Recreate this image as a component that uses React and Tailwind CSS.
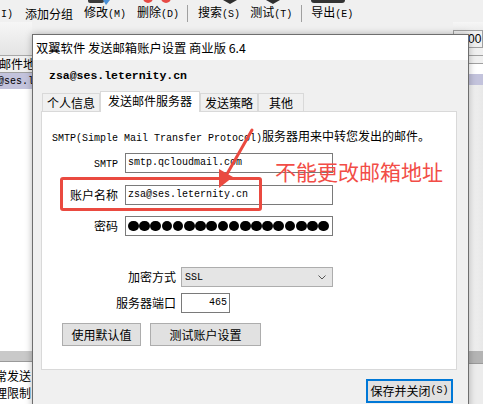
import React from "react";

const mono = "font-['Liberation_Mono',monospace] text-[10px]";

// SimSun style text: half width ascii, full width CJK
function Sim({ t }) {
  return t
    .split(/([\x20-\x7e]+)/)
    .filter(Boolean)
    .map((s, i) =>
      /^[\x20-\x7e]/.test(s) ? (
        <span key={i} className={mono}>
          {s}
        </span>
      ) : (
        <span key={i}>{s}</span>
      )
    );
}

function Field({ children, className = "" }) {
  return (
    <div
      className={
        "h-[20px] border border-[#7a7a7a] bg-white flex items-center leading-[14px] " +
        className
      }
    >
      {children}
    </div>
  );
}

function Toolbar() {
  return (
    <div className="h-[22px] bg-[#f0f0f0]">
      <svg width="483" height="5" className="block">
        <rect x="88" y="-4" width="16" height="7" rx="2" fill="#3a3a3a" />
        <path d="M103 0 L110 0 L106 5 Z" fill="#4a8fd6" />
        <circle cx="148" cy="-2" r="5" fill="#e64a45" />
        <circle cx="166" cy="-2" r="5" fill="#e64a45" />
        <path d="M223 0 L237 0 L230 4 Z" fill="#2e2e2e" />
        <path d="M266 0 L280 0 L273 4 Z" fill="#2e2e2e" />
        <rect x="311" y="-5" width="34" height="8" rx="3" fill="#333" />
      </svg>
      <div className="flex items-center h-[17px] leading-[14px] whitespace-nowrap">
        <span className="ml-[-5px]">
          <Sim t="(I)" />
        </span>
        <span className="ml-[12px]">添加分组</span>
        <span className="ml-[11px]">
          <Sim t="修改(M)" />
        </span>
        <span className="ml-[11px]">
          <Sim t="删除(D)" />
        </span>
        <span className="ml-[8px] w-px h-[17px] bg-[#a0a0a0]" />
        <span className="ml-[10px]">
          <Sim t="搜索(S)" />
        </span>
        <span className="ml-[10px]">
          <Sim t="测试(T)" />
        </span>
        <span className="ml-[9px] w-px h-[17px] bg-[#a0a0a0]" />
        <span className="ml-[9px]">
          <Sim t="导出(E)" />
        </span>
      </div>
    </div>
  );
}

function Tab({ label, active, w }) {
  return active ? (
    <div
      className={`${w} h-[21px] -mb-px relative z-10 bg-white border border-b-0 border-[#d9d9d9] flex items-center justify-center leading-[14px] pb-[2px]`}
    >
      {label}
    </div>
  ) : (
    <div
      className={`${w} h-[18px] bg-[#f0f0f0] border border-b-0 border-[#d9d9d9] flex items-center justify-center leading-[14px]`}
    >
      {label}
    </div>
  );
}

function Dialog() {
  return (
    <div className="absolute left-[32px] top-[34px] w-[437px] h-[390px] border border-[#6e6e6e] bg-[#f0f0f0] shadow-[0_0_7px_rgba(0,0,0,0.28)]">
      <div className="h-[25px] bg-white flex items-center pl-[3px] text-[12.3px] leading-[14px]">
        双翼软件 发送邮箱账户设置 商业版 6.4
      </div>
      <div className="pt-[9px] pl-[16px] h-[22px] font-['Liberation_Mono',monospace] font-bold text-[11.5px] leading-[13px]">
        zsa@ses.leternity.cn
      </div>
      <div className="mt-[9px] ml-[9px] flex items-end h-[20px]">
        <Tab label="个人信息" w="w-[58px]" />
        <Tab label="发送邮件服务器" w="w-[100px]" active />
        <Tab label="发送策略" w="w-[58px]" />
        <Tab label="其他" w="w-[46px]" />
      </div>
      <div className="ml-[8px] w-[416px] h-[259px] bg-white border border-[#d9d9d9]">
        <div className="mt-[17px] ml-[10px] h-[14px] leading-[14px] whitespace-nowrap">
          <Sim t="SMTP(Simple Mail Transfer Protocol)服务器用来中转您发出的邮件。" />
        </div>
        <div className="mt-[10px] flex items-center">
          <div className="w-[76px] text-right leading-[14px]">
            <Sim t="SMTP" />
          </div>
          <Field className="ml-[7px] w-[208px] pl-[2px]">
            <span className={mono}>smtp.qcloudmail.com</span>
          </Field>
        </div>
        <div className="mt-[12px] flex items-center">
          <div className="w-[76px] text-right leading-[14px]">账户名称</div>
          <Field className="ml-[7px] w-[208px] pl-[2px]">
            <span className={mono}>zsa@ses.leternity.cn</span>
          </Field>
        </div>
        <div className="mt-[11px] flex items-center">
          <div className="w-[76px] text-right leading-[14px]">密码</div>
          <Field className="ml-[7px] w-[208px] pl-[2px] gap-[0.5px]">
            {Array.from({ length: 18 }).map((_, i) => (
              <span key={i} className="w-[10.7px] h-[10.7px] rounded-full bg-black" />
            ))}
          </Field>
        </div>
        <div className="mt-[31px] flex items-center">
          <div className="w-[134px] text-right leading-[14px]">加密方式</div>
          <div className="ml-[5px] w-[152px] h-[20px] bg-[#e5e5e5] border border-[#adadad] flex items-center justify-between pl-[3px] pr-[6px]">
            <span className={mono}>SSL</span>
            <svg width="8" height="5" viewBox="0 0 8 5">
              <path d="M0.5 0.5 L4 4 L7.5 0.5" fill="none" stroke="#555" strokeWidth="1" />
            </svg>
          </div>
        </div>
        <div className="mt-[6px] flex items-center">
          <div className="w-[134px] text-right leading-[14px]">服务器端口</div>
          <Field className="ml-[5px] w-[49px] justify-end pr-[2px]">
            <span className={mono}>465</span>
          </Field>
        </div>
        <div className="mt-[10px] flex">
          <div className="ml-[20px] w-[79px] h-[23px] bg-[#e1e1e1] border border-[#adadad] flex items-center justify-center leading-[14px]">
            使用默认值
          </div>
          <div className="ml-[9px] w-[111px] h-[23px] bg-[#e1e1e1] border border-[#adadad] flex items-center justify-center leading-[14px]">
            测试账户设置
          </div>
        </div>
      </div>
      <div className="mt-[9px] flex justify-end pr-[15px]">
        <div className="w-[87px] h-[24px] bg-[#e1e1e1] border-2 border-[#0078d7] flex items-center justify-center leading-[14px]">
          <Sim t="保存并关闭(S)" />
        </div>
      </div>
    </div>
  );
}

export default function App() {
  return (
    <div className="relative w-[483px] h-[404px] overflow-hidden bg-[#f0f0f0] font-['Noto_Sans_CJK_SC',sans-serif] text-[12px] text-black">
      <Toolbar />
      <div className="flex h-[382px]">
        {/* left pane */}
        <div className="w-[32px] flex flex-col overflow-hidden whitespace-nowrap">
          <div className="h-[34px] bg-gradient-to-b from-[#f6f6f6] to-[#e4e4e4] border-b border-[#a8a8a8]" />
          <div className="h-[16px] bg-[#f0f0f0] leading-[14px] flex items-center">
            <span className="ml-[-1px]">邮件地</span>
          </div>
          <div className="h-[17px] bg-[#c3c3dc] border-t border-[#a0a0a0] flex items-center">
            <span className={mono + " ml-[-2px]"}>@ses.l</span>
          </div>
          <div className="h-[262px] bg-white" />
          <div className="h-[11px] bg-[#c9c9c9] border-b border-[#9a9a9a]" />
          <div className="flex-1 bg-white leading-[17px] pt-[5px]">
            <div className="ml-[-5px]">常发送</div>
            <div className="ml-[-5px]">理限制</div>
          </div>
        </div>
        <div className="flex-1" />
        {/* right pane */}
        <div className="w-[30px] flex flex-col overflow-hidden">
          <div className="h-[8px] bg-gradient-to-b from-[#f6f6f6] to-[#ececec]" />
          <div className="h-[18px] border border-[#a0a0a0] bg-[#f0f0f0] flex items-center pl-[14px] leading-[14px]">
            <span className="font-['Liberation_Sans',sans-serif] text-[12px]">00</span>
          </div>
          <div className="h-[8px] border-b border-[#a0a0a0] bg-[#f0f0f0]" />
          <div className="h-[8px] border-b border-[#a0a0a0] bg-[#f0f0f0]" />
          <div className="h-[10px] bg-white" />
          <div className="h-[11px] bg-[#c3c3dc]" />
          <div className="h-[266px] bg-gradient-to-r from-white to-[#e8e8e8]" />
          <div className="h-[13px] bg-[#b4b4b4] border-b border-[#9a9a9a]" />
          <div className="flex-1 bg-[#ececec]" />
        </div>
      </div>
      <Dialog />
      {/* annotation */}
      <div className="absolute left-[60px] top-[177px] w-[202px] h-[34px] border-[3px] border-[#ea4a40] rounded-[3px]" />
      <div className="absolute left-[275px] top-[158px] text-[21px] leading-[26px] text-[#f24d47] whitespace-nowrap">
        不能更改邮箱地址
      </div>
      <svg
        className="absolute left-0 top-0 pointer-events-none"
        width="483"
        height="404"
      >
        <line x1="252" y1="130" x2="227" y2="174" stroke="#ea4a40" strokeWidth="3" strokeLinecap="round" />
        <path d="M219 188 L219 169 L233 177 Z" fill="#ea4a40" />
      </svg>
    </div>
  );
}
